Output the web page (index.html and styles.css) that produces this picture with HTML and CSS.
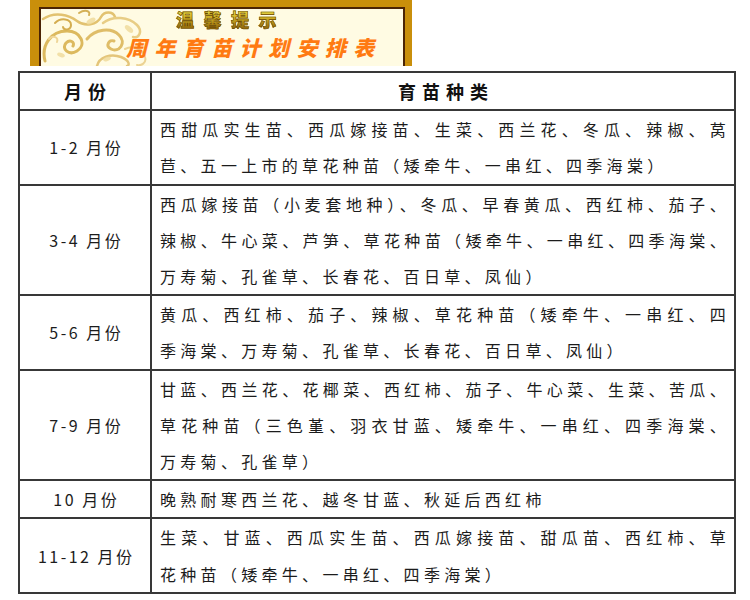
FILE: index.html
```html
<!DOCTYPE html>
<html lang="zh-CN">
<head>
<meta charset="utf-8">
<title>周年育苗计划安排表</title>
<link rel="stylesheet" href="styles.css">
</head>
<body>
<div class="page">
  <div class="banner">
    <div class="banner-inner">
      <svg class="ornament" width="120" height="57" viewBox="0 0 120 57" aria-hidden="true">
        <g fill="none" stroke-linecap="round">
          <path d="M4 52 C 0 36, 10 22, 26 22 C 40 22, 46 36, 36 42 C 28 47, 20 40, 25 34 C 29 30, 34 33, 32 37" stroke="#dcb95e" stroke-width="3"/>
          <path d="M2 10 C 14 2, 28 6, 36 12 C 44 18, 56 16, 60 8 C 63 2, 72 2, 74 8" stroke="#e2c270" stroke-width="2.5"/>
          <path d="M14 14 C 20 8, 30 10, 30 16 C 30 21, 23 22, 22 18" stroke="#d4ad50" stroke-width="2"/>
          <path d="M46 30 C 54 20, 70 18, 78 26 C 86 34, 78 44, 70 40 C 64 37, 68 30, 73 32" stroke="#dfbd68" stroke-width="3"/>
          <path d="M62 14 C 72 6, 88 8, 96 16 C 102 22, 98 30, 92 28" stroke="#e8cd85" stroke-width="2.5"/>
          <path d="M56 57 C 58 48, 70 44, 80 48 C 90 52, 88 57, 86 57" stroke="#e4c57a" stroke-width="2.5"/>
          <path d="M84 40 C 92 36, 102 40, 104 48 C 106 54, 100 57, 96 56" stroke="#ecd394" stroke-width="2"/>
          <path d="M8 30 C 12 26, 18 28, 16 33" stroke="#eed597" stroke-width="2"/>
          <path d="M38 4 C 44 0, 50 2, 48 6" stroke="#d4b056" stroke-width="2"/>
        </g>
        <g fill="#f0dc9e" opacity="0.85">
          <ellipse cx="50" cy="12" rx="5" ry="2.5" transform="rotate(-30 50 12)"/>
          <ellipse cx="88" cy="20" rx="5" ry="2.5" transform="rotate(40 88 20)"/>
          <ellipse cx="20" cy="46" rx="4" ry="2" transform="rotate(20 20 46)"/>
          <ellipse cx="66" cy="50" rx="4" ry="2" transform="rotate(-20 66 50)"/>
        </g>
      </svg>
      <div class="title-sub">温馨提示</div>
      <div class="title-main">周年育苗计划安排表</div>
    </div>
  </div>

  <table class="plan">
    <colgroup>
      <col class="c-month">
      <col class="c-kind">
    </colgroup>
    <thead>
      <tr>
        <th>月份</th>
        <th>育苗种类</th>
      </tr>
    </thead>
    <tbody>
      <tr>
        <td class="month">1-2 月份</td>
        <td class="kinds">
          <span class="ln">西甜瓜实生苗、西瓜嫁接苗、生菜、西兰花、冬瓜、辣椒、莴</span>
          <span class="ln last">苣、五一上市的草花种苗（矮牵牛、一串红、四季海棠）</span>
        </td>
      </tr>
      <tr>
        <td class="month">3-4 月份</td>
        <td class="kinds">
          <span class="ln">西瓜嫁接苗（小麦套地种）、冬瓜、早春黄瓜、西红柿、茄子、</span>
          <span class="ln">辣椒、牛心菜、芦笋、草花种苗（矮牵牛、一串红、四季海棠、</span>
          <span class="ln last">万寿菊、孔雀草、长春花、百日草、凤仙）</span>
        </td>
      </tr>
      <tr>
        <td class="month">5-6 月份</td>
        <td class="kinds">
          <span class="ln">黄瓜、西红柿、茄子、辣椒、草花种苗（矮牵牛、一串红、四</span>
          <span class="ln last">季海棠、万寿菊、孔雀草、长春花、百日草、凤仙）</span>
        </td>
      </tr>
      <tr>
        <td class="month">7-9 月份</td>
        <td class="kinds">
          <span class="ln">甘蓝、西兰花、花椰菜、西红柿、茄子、牛心菜、生菜、苦瓜、</span>
          <span class="ln">草花种苗（三色堇、羽衣甘蓝、矮牵牛、一串红、四季海棠、</span>
          <span class="ln last">万寿菊、孔雀草）</span>
        </td>
      </tr>
      <tr>
        <td class="month">10 月份</td>
        <td class="kinds">
          <span class="ln last">晚熟耐寒西兰花、越冬甘蓝、秋延后西红柿</span>
        </td>
      </tr>
      <tr>
        <td class="month">11-12 月份</td>
        <td class="kinds">
          <span class="ln">生菜、甘蓝、西瓜实生苗、西瓜嫁接苗、甜瓜苗、西红柿、草</span>
          <span class="ln last">花种苗（矮牵牛、一串红、四季海棠）</span>
        </td>
      </tr>
    </tbody>
  </table>
</div>
</body>
</html>
```

FILE: styles.css
```css
html, body {
  margin: 0;
  padding: 0;
  background: #ffffff;
}

body {
  font-family: "Noto Sans CJK SC", "Noto Sans", "Liberation Sans", sans-serif;
  color: #1c1c1c;
}

.page {
  width: 750px;
  height: 600px;
  overflow: hidden;
}

/* ---------- banner ---------- */
.banner {
  margin-left: 30px;
  width: 382px;
  height: 66px;
  box-sizing: border-box;
  background: #c98f0b;
  padding: 7px 7px 0 9px;
}

.banner-inner {
  position: relative;
  height: 59px;
  box-sizing: border-box;
  border: 2px solid #4b2405;
  border-bottom: none;
  background: #fffbe3;
  display: flex;
  flex-direction: column;
}

.ornament {
  position: absolute;
  left: 0;
  top: 0;
}

.title-sub {
  position: relative;
  margin: 0 0 0 135px;
  font-size: 18px;
  line-height: 20px;
  font-weight: 900;
  letter-spacing: 9.5px;
  background: linear-gradient(180deg, #f2e64c 0%, #cfae24 45%, #8e6408 100%);
  -webkit-background-clip: text;
  background-clip: text;
  color: transparent;
  -webkit-text-stroke: 0.6px #6a4800;
  width: max-content;
}

.title-main {
  position: relative;
  margin: 4.5px 0 0 85px;
  font-size: 21px;
  line-height: 26px;
  font-weight: 900;
  font-style: italic;
  letter-spacing: 7.4px;
  color: #ff7a12;
  width: max-content;
}

/* ---------- table ---------- */
.plan {
  margin: 5px 0 0 18px;
  width: 718px;
  border-collapse: collapse;
  table-layout: fixed;
}

.c-month {
  width: 132px;
}

.plan th,
.plan td {
  border: 2px solid #383838;
  padding: 0;
  line-height: 36.2px;
  vertical-align: middle;
}

.plan th {
  font-size: 18px;
  font-weight: 700;
  color: #111111;
  letter-spacing: 6px;
  text-indent: 6px;
  text-align: center;
}

.plan .month {
  font-size: 16px;
  letter-spacing: 2.5px;
  text-indent: 2.5px;
  text-align: center;
}

.plan .kinds {
  font-size: 16px;
  letter-spacing: 4.3px;
  padding: 0 4px 0 8px;
}

.ln {
  display: block;
  white-space: nowrap;
  text-align: justify;
  text-align-last: justify;
  text-justify: inter-character;
}

.ln.last {
  text-align: left;
  text-align-last: left;
}
```
